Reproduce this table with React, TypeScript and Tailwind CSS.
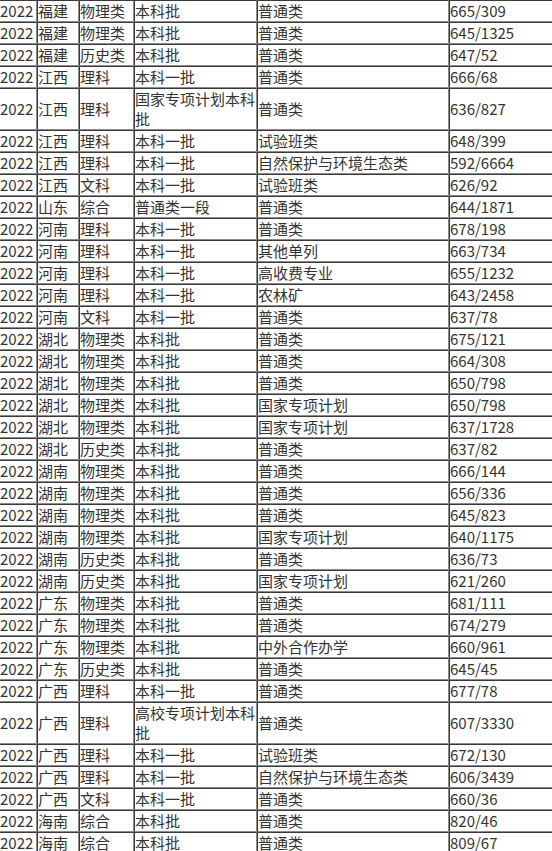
const rows: [string, string, string, string, string, string][] = [
  ["2022", "福建", "物理类", "本科批", "普通类", "665/309"],
  ["2022", "福建", "物理类", "本科批", "普通类", "645/1325"],
  ["2022", "福建", "历史类", "本科批", "普通类", "647/52"],
  ["2022", "江西", "理科", "本科一批", "普通类", "666/68"],
  ["2022", "江西", "理科", "国家专项计划本科批", "普通类", "636/827"],
  ["2022", "江西", "理科", "本科一批", "试验班类", "648/399"],
  ["2022", "江西", "理科", "本科一批", "自然保护与环境生态类", "592/6664"],
  ["2022", "江西", "文科", "本科一批", "试验班类", "626/92"],
  ["2022", "山东", "综合", "普通类一段", "普通类", "644/1871"],
  ["2022", "河南", "理科", "本科一批", "普通类", "678/198"],
  ["2022", "河南", "理科", "本科一批", "其他单列", "663/734"],
  ["2022", "河南", "理科", "本科一批", "高收费专业", "655/1232"],
  ["2022", "河南", "理科", "本科一批", "农林矿", "643/2458"],
  ["2022", "河南", "文科", "本科一批", "普通类", "637/78"],
  ["2022", "湖北", "物理类", "本科批", "普通类", "675/121"],
  ["2022", "湖北", "物理类", "本科批", "普通类", "664/308"],
  ["2022", "湖北", "物理类", "本科批", "普通类", "650/798"],
  ["2022", "湖北", "物理类", "本科批", "国家专项计划", "650/798"],
  ["2022", "湖北", "物理类", "本科批", "国家专项计划", "637/1728"],
  ["2022", "湖北", "历史类", "本科批", "普通类", "637/82"],
  ["2022", "湖南", "物理类", "本科批", "普通类", "666/144"],
  ["2022", "湖南", "物理类", "本科批", "普通类", "656/336"],
  ["2022", "湖南", "物理类", "本科批", "普通类", "645/823"],
  ["2022", "湖南", "物理类", "本科批", "国家专项计划", "640/1175"],
  ["2022", "湖南", "历史类", "本科批", "普通类", "636/73"],
  ["2022", "湖南", "历史类", "本科批", "国家专项计划", "621/260"],
  ["2022", "广东", "物理类", "本科批", "普通类", "681/111"],
  ["2022", "广东", "物理类", "本科批", "普通类", "674/279"],
  ["2022", "广东", "物理类", "本科批", "中外合作办学", "660/961"],
  ["2022", "广东", "历史类", "本科批", "普通类", "645/45"],
  ["2022", "广西", "理科", "本科一批", "普通类", "677/78"],
  ["2022", "广西", "理科", "高校专项计划本科批", "普通类", "607/3330"],
  ["2022", "广西", "理科", "本科一批", "试验班类", "672/130"],
  ["2022", "广西", "理科", "本科一批", "自然保护与环境生态类", "606/3439"],
  ["2022", "广西", "文科", "本科一批", "普通类", "660/36"],
  ["2022", "海南", "综合", "本科批", "普通类", "820/46"],
  ["2022", "海南", "综合", "本科批", "普通类", "809/67"],
];

const cell =
  "border border-t-[#3a3a3a] border-l-[#3a3a3a] border-b-[#8a8a8a] border-r-[#8a8a8a] p-0 align-middle text-left";

export default function App() {
  return (
    <div className="h-[851px] w-[552px] overflow-hidden bg-white">
      <table
        className="w-[620px] table-fixed border-separate border-spacing-0 text-[15px] leading-[20px] text-[#333]"
        style={{ fontFamily: '"Noto Sans CJK SC", "Noto Sans", sans-serif' }}
      >
        <colgroup>
          <col className="w-[37px]" />
          <col className="w-[42px]" />
          <col className="w-[55px]" />
          <col className="w-[123px]" />
          <col className="w-[192px]" />
          <col />
        </colgroup>
        <tbody>
          {rows.map((r, i) => (
            <tr key={i}>
              {r.map((v, j) => (
                <td
                  key={j}
                  className={j === 0 ? cell + " border-l-0 whitespace-nowrap" : cell}
                >
                  {v}
                </td>
              ))}
            </tr>
          ))}
        </tbody>
      </table>
    </div>
  );
}
